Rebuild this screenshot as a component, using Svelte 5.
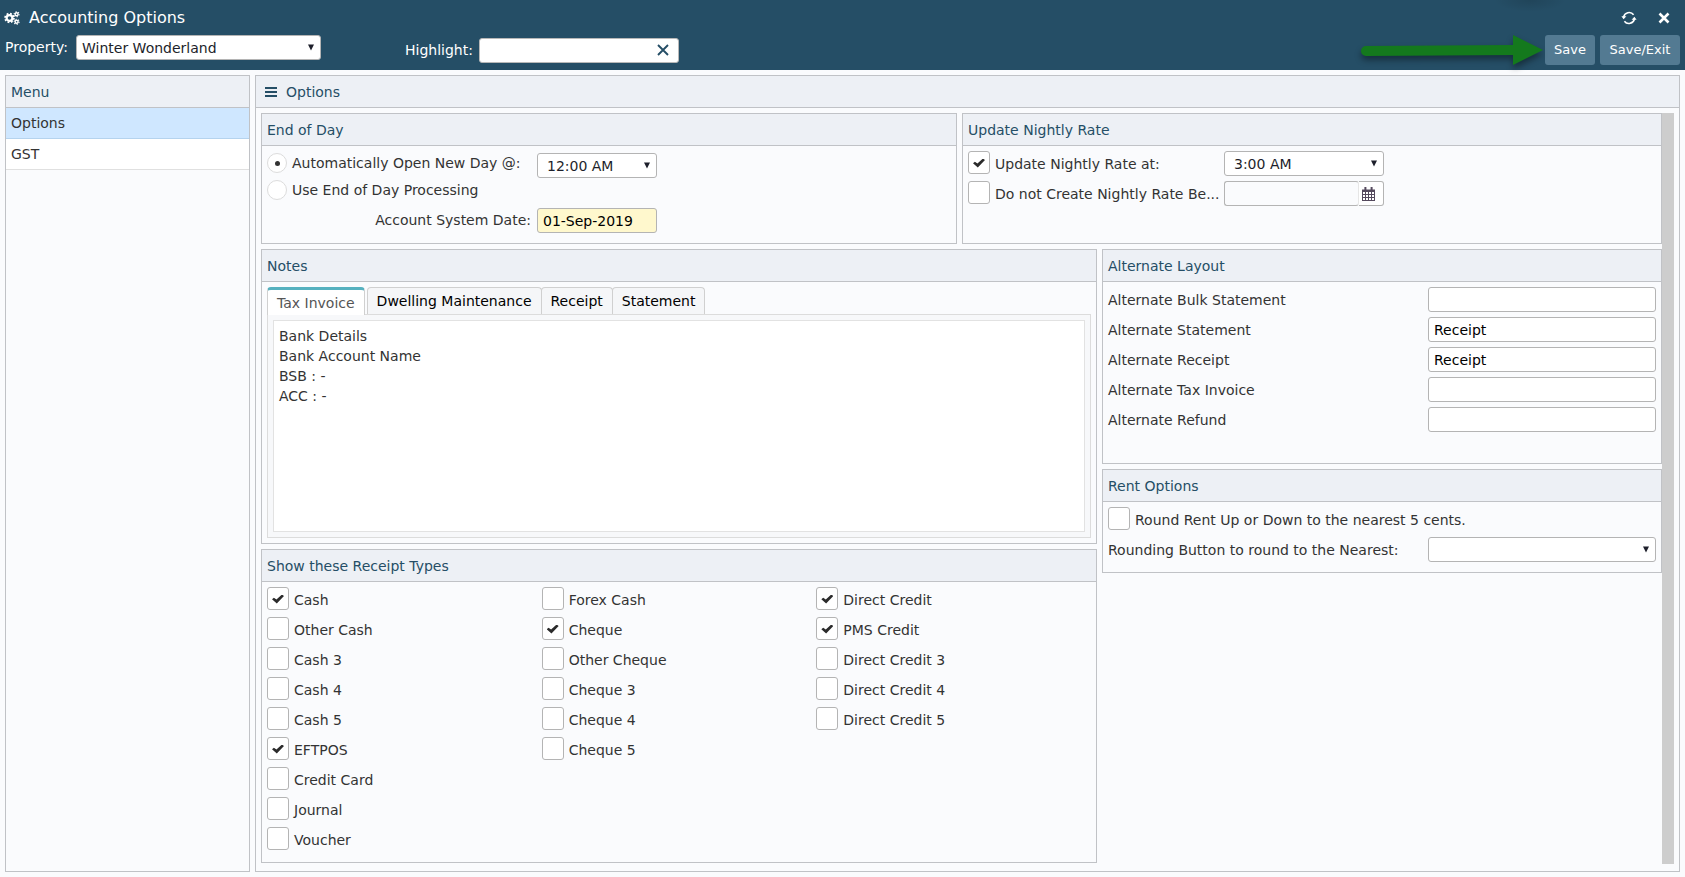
<script lang="ts">
  interface ReceiptType {
    label: string;
    checked: boolean;
  }

  const menu = ['Options', 'GST'];
  const tabs = ['Tax Invoice', 'Dwelling Maintenance', 'Receipt', 'Statement'];

  let activeMenu = $state('Options');
  let activeTab = $state('Tax Invoice');
  let highlight = $state('');
  let dayMode = $state('auto');
  let updateRate = $state(true);
  let skipRate = $state(false);
  let roundRent = $state(false);

  let notes = $state<Record<string, string>>({
    'Tax Invoice': 'Bank Details\nBank Account Name\nBSB : -\nACC : -',
    'Dwelling Maintenance': '',
    'Receipt': '',
    'Statement': '',
  });

  let layouts = $state([
    { id: 'bulk', label: 'Alternate Bulk Statement', value: '' },
    { id: 'statement', label: 'Alternate Statement', value: 'Receipt' },
    { id: 'receipt', label: 'Alternate Receipt', value: 'Receipt' },
    { id: 'invoice', label: 'Alternate Tax Invoice', value: '' },
    { id: 'refund', label: 'Alternate Refund', value: '' },
  ]);

  function types(labels: string[], on: string[]): ReceiptType[] {
    return labels.map((label) => ({ label, checked: on.includes(label) }));
  }

  let receiptTypes = $state([
    types(
      ['Cash', 'Other Cash', 'Cash 3', 'Cash 4', 'Cash 5', 'EFTPOS', 'Credit Card', 'Journal', 'Voucher'],
      ['Cash', 'EFTPOS']
    ),
    types(['Forex Cash', 'Cheque', 'Other Cheque', 'Cheque 3', 'Cheque 4', 'Cheque 5'], ['Cheque']),
    types(
      ['Direct Credit', 'PMS Credit', 'Direct Credit 3', 'Direct Credit 4', 'Direct Credit 5'],
      ['Direct Credit', 'PMS Credit']
    ),
  ]);
</script>

{#snippet caret()}
  <svg class="caret" viewBox="0 0 6 7" width="6" height="7" aria-hidden="true">
    <path d="M0 0.5h6L3 6.5z" fill="#1d1f2b"/>
  </svg>
{/snippet}

<div class="app">
  <header class="topbar">
    <div class="title-row">
      <svg viewBox="0 0 16 14" width="16" height="14" fill="none" stroke="#fff" aria-hidden="true">
        <circle cx="5.5" cy="7" r="2.9" stroke-width="2.2"/>
        <circle cx="5.5" cy="7" r="4.4" stroke-width="1.8" stroke-dasharray="1.8 1.65"/>
        <circle cx="12.6" cy="3.2" r="1.5" stroke-width="1.4"/>
        <circle cx="12.6" cy="3.2" r="2.5" stroke-width="1.1" stroke-dasharray="1.2 1.4"/>
        <circle cx="12.6" cy="10.8" r="1.5" stroke-width="1.4"/>
        <circle cx="12.6" cy="10.8" r="2.5" stroke-width="1.1" stroke-dasharray="1.2 1.4"/>
      </svg>
      <h1>Accounting Options</h1>
      <button class="icon-btn" aria-label="Refresh">
        <svg viewBox="0 0 16 16" width="16" height="16" fill="none" stroke="#fff" stroke-width="1.6" aria-hidden="true">
          <path d="M2.6 7.2a5.6 5.6 0 0 1 10-2.4M13.4 8.8a5.6 5.6 0 0 1-10 2.4"/>
          <path d="M0.4 6.2h5L2.6 9.2zM15.6 9.8h-5l2.8-3z" fill="#fff" stroke="none"/>
        </svg>
      </button>
      <button class="icon-btn" aria-label="Close">
        <svg viewBox="0 0 12 12" width="12" height="12" stroke="#fff" stroke-width="2.6" aria-hidden="true">
          <path d="M1.5 1.5l9 9M10.5 1.5l-9 9"/>
        </svg>
      </button>
    </div>

    <div class="tool-row">
      <label class="property-label" for="property">Property:</label>
      <div class="select property">
        <select id="property"><option>Winter Wonderland</option></select>
        {@render caret()}
      </div>
      <label class="highlight-label" for="highlight">Highlight:</label>
      <div class="search">
        <input id="highlight" type="text" bind:value={highlight}>
        <button aria-label="Clear" onclick={() => (highlight = '')}>
          <svg viewBox="0 0 12 12" width="12" height="12" stroke="#254e66" stroke-width="1.9" aria-hidden="true">
            <path d="M1 1l10 10M11 1L1 11"/>
          </svg>
        </button>
      </div>
      <div class="actions">
        <svg class="arrow" viewBox="0 0 182 30" width="182" height="30" aria-hidden="true">
          <path d="M5 11L152 10V0l30 15-30 15V20L5 21a5 5 0 0 1 0-10z" fill="#14791d"/>
        </svg>
        <button class="btn">Save</button>
        <button class="btn btn-exit">Save/Exit</button>
      </div>
    </div>
  </header>

  <div class="workspace">
    <nav class="panel sidebar">
      <h2>Menu</h2>
      {#each menu as item (item)}
        <button class:active={activeMenu === item} onclick={() => (activeMenu = item)}>{item}</button>
      {/each}
    </nav>

    <main class="panel main">
      <h2>
        <svg viewBox="0 0 12 10" width="12" height="10" fill="#254e66" aria-hidden="true">
          <path d="M0 0h12v2H0zM0 4h12v2H0zM0 8h12v2H0z"/>
        </svg>
        Options
      </h2>
      <div class="main-body">
        <div class="content">
          <div class="split-top">
            <section class="panel">
              <h2>End of Day</h2>
              <div class="body day-grid">
                <label class="radio">
                  <input type="radio" value="auto" bind:group={dayMode}>
                  Automatically Open New Day @:
                </label>
                <div class="select time">
                  <select aria-label="Open new day at"><option>12:00 AM</option></select>
                  {@render caret()}
                </div>
                <label class="radio wide">
                  <input type="radio" value="manual" bind:group={dayMode}>
                  Use End of Day Processing
                </label>
                <label class="date-label" for="system-date">Account System Date:</label>
                <input id="system-date" class="field date" type="text" value="01-Sep-2019">
              </div>
            </section>

            <section class="panel">
              <h2>Update Nightly Rate</h2>
              <div class="body">
                <div class="row">
                  <label class="check rate-label">
                    <input type="checkbox" bind:checked={updateRate}>
                    <span>Update Nightly Rate at:</span>
                  </label>
                  <div class="select time rate-field">
                    <select aria-label="Update nightly rate at"><option>3:00 AM</option></select>
                    {@render caret()}
                  </div>
                </div>
                <div class="row">
                  <label class="check rate-label">
                    <input type="checkbox" bind:checked={skipRate}>
                    <span>Do not Create Nightly Rate Be...</span>
                  </label>
                  <div class="picker rate-field">
                    <input type="text" aria-label="Nightly rate start date" disabled={!skipRate}>
                    <button aria-label="Pick a date">
                      <svg viewBox="0 0 13 14" width="13" height="14" aria-hidden="true">
                        <path d="M0 2.5h13V14H0z" fill="#554a5e"/>
                        <path d="M2.4 0h2v4h-2zM8.6 0h2v4h-2z" fill="#554a5e"/>
                        <path d="M1 5h2v2H1zM4 5h2v2H4zM7 5h2v2H7zM10 5h2v2h-2zM1 8h2v2H1zM4 8h2v2H4zM7 8h2v2H7zM10 8h2v2h-2zM1 11h2v2H1zM4 11h2v2H4zM7 11h2v2H7zM10 11h2v2h-2z" fill="#fff"/>
                      </svg>
                    </button>
                  </div>
                </div>
              </div>
            </section>
          </div>

          <div class="split-bottom">
            <div class="stack">
              <section class="panel">
                <h2>Notes</h2>
                <div class="notes">
                  <div class="tabs" role="tablist">
                    {#each tabs as tab (tab)}
                      <button
                        role="tab"
                        aria-selected={activeTab === tab}
                        class:active={activeTab === tab}
                        onclick={() => (activeTab = tab)}
                      >{tab}</button>
                    {/each}
                  </div>
                  <div class="tab-panel" role="tabpanel">
                    <textarea aria-label={activeTab} spellcheck="false" bind:value={notes[activeTab]}></textarea>
                  </div>
                </div>
              </section>

              <section class="panel">
                <h2>Show these Receipt Types</h2>
                <div class="body receipt-types">
                  {#each receiptTypes as column}
                    <div class="column">
                      {#each column as type (type.label)}
                        <label class="check">
                          <input type="checkbox" bind:checked={type.checked}>
                          <span>{type.label}</span>
                        </label>
                      {/each}
                    </div>
                  {/each}
                </div>
              </section>
            </div>

            <div class="stack">
              <section class="panel layouts">
                <h2>Alternate Layout</h2>
                <div class="body">
                  {#each layouts as layout (layout.id)}
                    <div class="row spread">
                      <label for={layout.id}>{layout.label}</label>
                      <input id={layout.id} class="field wide-field" type="text" bind:value={layout.value}>
                    </div>
                  {/each}
                </div>
              </section>

              <section class="panel">
                <h2>Rent Options</h2>
                <div class="body">
                  <label class="check">
                    <input type="checkbox" bind:checked={roundRent}>
                    <span>Round Rent Up or Down to the nearest 5 cents.</span>
                  </label>
                  <div class="row spread">
                    <label for="rounding">Rounding Button to round to the Nearest:</label>
                    <div class="select wide-field">
                      <select id="rounding"><option></option></select>
                      {@render caret()}
                    </div>
                  </div>
                </div>
              </section>
            </div>
          </div>
        </div>
        <div class="scrollbar"></div>
      </div>
    </main>
  </div>
</div>

<style>
  :global(body) {
    margin: 0;
    background: #fafbfd;
  }

  .app, .app * {
    box-sizing: border-box;
  }

  .app {
    display: flex;
    flex-direction: column;
    min-height: 100vh;
    background: #fafbfd;
    color: #333;
    font-family: Verdana, 'DejaVu Sans', sans-serif;
    font-size: 14px;
    line-height: 20px;
  }

  button, input, select, textarea {
    margin: 0;
    font: inherit;
    color: #000;
  }

  button {
    padding: 0;
    border: 0;
    background: none;
    cursor: pointer;
  }

  svg {
    display: block;
    flex: none;
  }

  label {
    white-space: nowrap;
  }

  /* header */
  .topbar {
    height: 70px;
    background:
      radial-gradient(ellipse 36px 12px at calc(100% - 155px) 0, rgba(0, 0, 0, 0.12), transparent),
      #254e66;
    color: #fff;
  }

  .title-row {
    display: flex;
    align-items: center;
    height: 35px;
    padding: 0 13px 0 4px;
  }

  h1 {
    flex: 1;
    margin: 0 0 0 9px;
    font-size: 16px;
    font-weight: 400;
  }

  .icon-btn {
    display: grid;
    place-items: center;
    width: 16px;
    height: 16px;
    margin-left: 19px;
  }

  .tool-row {
    display: flex;
    align-items: center;
    padding: 0 5px;
    height: 30px;
  }

  .property-label, .property {
    align-self: flex-start;
    line-height: 25px;
  }

  .property-label { width: 71px; }
  .property { width: 245px; }

  .highlight-label {
    width: 74px;
    margin-left: 84px;
  }

  .search {
    display: flex;
    align-items: center;
    width: 200px;
    height: 25px;
    padding-right: 9px;
    background: #fff;
    border: 1px solid #b8b8b8;
    border-radius: 3px;
  }

  .search input {
    flex: 1;
    min-width: 0;
    padding: 0 5px;
    border: 0;
    background: none;
    outline: 0;
  }

  .actions {
    display: flex;
    margin-left: auto;
  }

  .arrow {
    margin-right: 2px;
    overflow: visible;
    filter: drop-shadow(0 4px 3px rgba(0, 0, 0, 0.4));
  }

  .btn {
    width: 50px;
    height: 30px;
    background: #537a92;
    border-radius: 3px;
    color: #fff;
    font-size: 13px;
  }

  .btn-exit {
    width: 80px;
    margin-left: 5px;
  }

  /* panels */
  .workspace {
    flex: 1;
    display: flex;
    gap: 5px;
    padding: 5px;
  }

  .panel {
    border: 1px solid #c0c2c6;
    background: #fafbfd;
  }

  h2 {
    display: flex;
    align-items: center;
    gap: 9px;
    height: 32px;
    margin: 0;
    padding: 0 5px;
    background: #edf0f5;
    border-bottom: 1px solid #c0c2c6;
    color: #254e66;
    font-size: 14px;
    font-weight: 400;
  }

  .sidebar {
    flex: none;
    width: 245px;
  }

  .sidebar button {
    display: block;
    width: 100%;
    height: 31px;
    padding: 0 5px;
    background: #fff;
    border-bottom: 1px solid #e0e0e0;
    color: #333;
    text-align: left;
  }

  .sidebar button.active {
    background: #cfe7ff;
    border-bottom-color: #b5d3ee;
  }

  .main {
    flex: 1;
    min-width: 0;
    display: flex;
    flex-direction: column;
  }

  .main > h2 { padding: 0 9px; }

  .main-body {
    flex: 1;
    display: flex;
    padding: 5px 5px 7px;
  }

  .content {
    flex: 1;
    min-width: 0;
  }

  .scrollbar {
    width: 12px;
    background: #cdcdcd;
  }

  .split-top {
    display: grid;
    grid-template-columns: 174fr 175fr;
    gap: 5px;
    margin-bottom: 5px;
  }

  .split-bottom {
    display: grid;
    grid-template-columns: 209fr 140fr;
    gap: 5px;
  }

  .stack {
    display: flex;
    flex-direction: column;
    gap: 5px;
    min-width: 0;
  }

  .body {
    display: flex;
    flex-direction: column;
    gap: 5px;
    padding: 5px 5px 10px;
  }

  .row {
    display: flex;
    align-items: center;
    height: 25px;
  }

  .spread { justify-content: space-between; }

  /* fields */
  .field {
    height: 25px;
    padding: 0 5px;
    background: #fff;
    border: 1px solid #b4b4b4;
    border-radius: 3px;
  }

  .select {
    position: relative;
    height: 25px;
  }

  .select select {
    display: block;
    width: 100%;
    height: 25px;
    padding: 0 20px 0 5px;
    appearance: none;
    background: #fff;
    border: 1px solid #b4b4b4;
    border-radius: 3px;
    color: #1d1f2b;
  }

  .time select { padding-left: 9px; }

  .caret {
    position: absolute;
    top: 9px;
    right: 7px;
    pointer-events: none;
  }

  .wide-field { width: 228px; }

  .check, .radio {
    display: flex;
    align-items: center;
    gap: 5px;
    height: 25px;
  }

  .check input {
    flex: none;
    display: grid;
    place-items: center;
    width: 22px;
    height: 23px;
    margin-bottom: 2px;
    padding-top: 1px;
    appearance: none;
    background: #fff;
    border: 1px solid #b4b4b4;
    border-radius: 3px;
  }

  .check input:checked::after {
    content: '';
    width: 12px;
    height: 9px;
    background: #2b2b2b;
    clip-path: polygon(0 54%, 16% 36%, 37% 56%, 83% 0, 100% 16%, 40% 100%);
  }

  .radio input {
    display: grid;
    place-items: center;
    width: 20px;
    height: 20px;
    appearance: none;
    background: #fff;
    border: 1px solid #dcdcdc;
    border-radius: 50%;
  }

  .radio input:checked::after {
    content: '';
    width: 5px;
    height: 5px;
    border-radius: 50%;
    background: #333;
  }

  .day-grid {
    display: grid;
    grid-template-columns: 264px 120px;
    grid-template-rows: 25px 26px 25px;
    gap: 2px 6px;
    padding-top: 7px;
  }

  .day-grid .radio { height: 20px; }
  .day-grid .wide { grid-column: span 2; }

  .date-label {
    text-align: right;
    line-height: 25px;
  }

  .date { background: #fff8cd; }

  .rate-label { width: 256px; }
  .rate-field { width: 160px; }

  .picker { display: flex; }

  .picker input {
    flex: 1;
    min-width: 0;
    height: 25px;
    background: #fafbfd;
    border: 1px solid #b4b4b4;
    border-right-color: #e6e6e6;
    border-radius: 3px;
  }

  .picker button {
    display: grid;
    place-items: center;
    width: 25px;
    height: 25px;
    background: #fff;
    border: 1px solid #b4b4b4;
    border-left: 0;
    border-radius: 0 3px 3px 0;
    padding-right: 5px;
  }

  /* notes */
  .notes { padding: 5px; }

  .tabs {
    display: flex;
    height: 27px;
  }

  .tabs button {
    height: 27px;
    margin-right: -1px;
    padding: 0 9px;
    background: #f5f6f8;
    border: 1px solid #d0d0d0;
    border-bottom: 0;
    border-radius: 4px 4px 0 0;
  }

  .tabs button.active {
    height: 28px;
    margin-right: 2px;
    background: #fff;
    border-top: 3px solid #56b1bf;
    color: #555;
    z-index: 1;
  }

  .tab-panel {
    height: 224px;
    padding: 5px;
    background: #f7f8fa;
    border: 1px solid #dcdcdc;
  }

  textarea {
    display: block;
    width: 100%;
    height: 212px;
    padding: 5px;
    background: #fff;
    border: 1px solid #e2e2e2;
    color: #333;
    resize: none;
  }

  .receipt-types {
    display: grid;
    grid-template-columns: repeat(3, 1fr);
    gap: 0;
  }

  .column {
    display: flex;
    flex-direction: column;
    gap: 5px;
  }

  .layouts { min-height: 215px; }
</style>
